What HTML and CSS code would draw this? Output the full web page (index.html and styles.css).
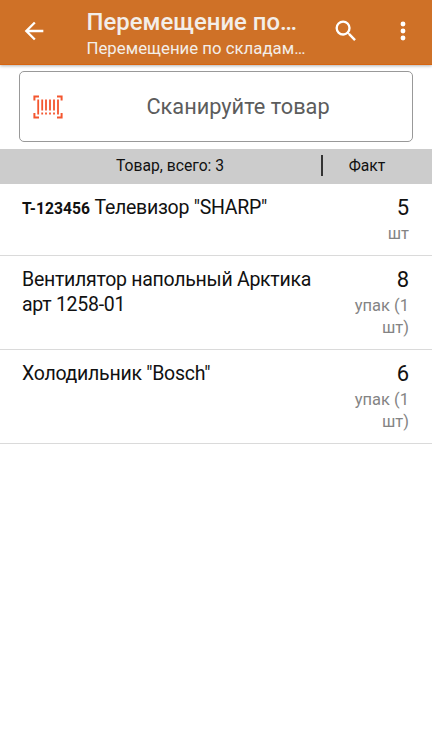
FILE: index.html
```html
<!DOCTYPE html>
<html lang="ru">
<head>
<meta charset="utf-8">
<title>Перемещение по складам</title>
<link rel="stylesheet" href="styles.css">
</head>
<body>
<header class="bar">
  <svg class="back" viewBox="0 0 24 24"><path d="M20 11H7.83l5.59-5.59L12 4l-8 8 8 8 1.41-1.41L7.83 13H20z"/></svg>
  <div class="titles"><h1>Перемещение по…</h1><p>Перемещение по складам…</p></div>
  <svg class="search" viewBox="0 0 24 24"><path d="M15.5 14h-.79l-.28-.27A6.47 6.47 0 0 0 16 9.5 6.5 6.5 0 1 0 9.5 16c1.61 0 3.09-.59 4.23-1.57l.27.28v.79l5 4.99L20.49 19zm-6 0a4.5 4.5 0 1 1 0-9 4.5 4.5 0 0 1 0 9z"/></svg>
  <svg class="more" viewBox="0 0 24 24"><circle cx="12" cy="6" r="2.1"/><circle cx="12" cy="12" r="2.1"/><circle cx="12" cy="18" r="2.1"/></svg>
</header>
<section class="scan">
  <svg class="code" viewBox="0 0 30 24"><path d="M6 1.6H1.4v4M1.4 18v4.4H6M24 1.6h4.6v4M28.6 18v4.4H24"/><path class="stripes" d="M5.2 4.5v15M9.2 4.5v11M13 4.5v11M17 4.5v11M21 4.5v11M25 4.5v15M9.2 17.5v2M13 17.5v2M17 17.5v2M21 17.5v2"/></svg>
  <span>Сканируйте товар</span>
</section>
<div class="head"><span class="goods">Товар, всего: 3</span><span class="fact">Факт</span></div>
<main>
  <article class="row"><div class="name"><b>T-123456</b> Телевизор "SHARP"</div><div class="qty"><strong>5</strong><span>шт</span></div></article>
  <article class="row"><div class="name">Вентилятор напольный Арктика арт 1258-01</div><div class="qty"><strong>8</strong><span>упак (1 шт)</span></div></article>
  <article class="row"><div class="name">Холодильник "Bosch"</div><div class="qty"><strong>6</strong><span>упак (1 шт)</span></div></article>
</main>
</body>
</html>
```
FILE: styles.css
```css
* { box-sizing: border-box; }
body { margin: 0; background: #fff; color: #111; font-family: Roboto, sans-serif; }
.bar { display: flex; height: 65px; background: #cf7127; border-bottom: 1px solid #d8650f; box-shadow: 0 1px 3px rgba(0,0,0,.3); color: #f3eee9; }
.bar svg { flex: none; fill: #fff; width: 28px; height: 28px; margin-top: 17px; }
.bar .back { margin-left: 19.5px; }
.titles { width: 245px; margin-left: 39px; padding-top: 7px; white-space: nowrap; }
h1 { margin: 0; font-size: 23.9px; line-height: 30px; font-weight: 500; }
.titles p { margin: 1px 0 0; font-size: 16.8px; line-height: 20px; }
.bar .more { margin-left: 29.5px; }
.scan { display: flex; align-items: center; height: 71px; margin: 6px 19px 7px; border: 1px solid #999; border-radius: 5px; color: #5c5c5c; }
.code { flex: none; width: 30px; height: 24px; margin-left: 13px; fill: none; stroke: #f4562f; stroke-width: 2; }
.stripes { stroke-width: 1.8; }
.scan span { flex: 1; padding-left: 1px; text-align: center; font-size: 21.75px; }
.head { display: flex; align-items: center; height: 35px; padding-bottom: 2px; background: #ccc; font-size: 15.7px; line-height: 21px; }
.goods { width: 323px; padding-left: 19px; text-align: center; border-right: 2px solid #333; }
.fact { width: 88px; text-align: center; }
.row { display: flex; justify-content: space-between; min-height: 72px; padding: 10px 23px 10px 22px; border-bottom: 1px solid #dadada; }
.name { width: 300px; padding-top: 1px; font-size: 19.5px; line-height: 25px; letter-spacing: -.27px; }
.name b { font-size: 15.7px; letter-spacing: 0; }
.qty { width: 62px; text-align: right; }
.qty strong { display: block; margin-bottom: 1px; font-size: 22px; line-height: 28px; font-weight: 400; }
.qty span { display: block; font-size: 16.5px; line-height: 22px; color: #848484; }
```
